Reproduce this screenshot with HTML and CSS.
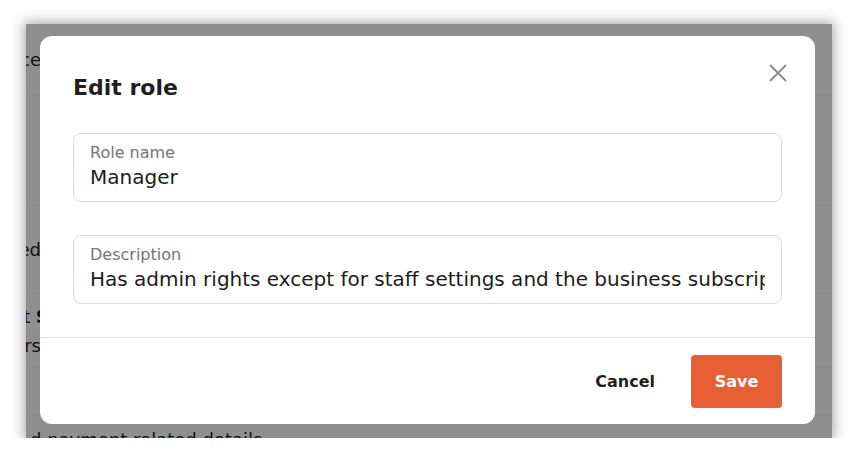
FILE: index.html
```html
<!DOCTYPE html>
<html lang="en">
<head>
  <meta charset="UTF-8">
  <meta name="viewport" content="width=device-width, initial-scale=1.0">
  <title>Edit role</title>
  <link rel="stylesheet" href="styles.css">
</head>
<body>
  <div class="screen">
    <div class="page">
      <div class="row r1"><div class="lead">Service</div></div>
      <div class="row r2"></div>
      <div class="row r3"><div class="lead">Services added</div></div>
      <div class="row r4">
        <div class="lead wide">Edit <b>Staff</b></div>
        <div class="lead">View all members</div>
      </div>
      <div class="row r5"></div>
      <div class="row r6"><div class="tail">d payment related details</div></div>
    </div>
    <div class="overlay"></div>

    <div class="modal">
      <div class="modal-head">
        <h2>Edit role</h2>
        <button class="close" aria-label="Close">
          <svg width="18" height="18" viewBox="0 0 18 18"><path d="M1 1L17 17M17 1L1 17" stroke="#8a8a8a" stroke-width="1.8" fill="none"/></svg>
        </button>
      </div>
      <div class="modal-body">
        <div class="field">
          <div class="label">Role name</div>
          <div class="value">Manager</div>
        </div>
        <div class="field">
          <div class="label">Description</div>
          <div class="value">Has admin rights except for staff settings and the business subscription</div>
        </div>
      </div>
      <div class="modal-foot">
        <button class="btn cancel">Cancel</button>
        <button class="btn save">Save</button>
      </div>
    </div>
  </div>
</body>
</html>
```

FILE: styles.css
```css
* {
  box-sizing: border-box;
}
body {
  margin: 0;
  background: #fff;
  font-family: "DejaVu Sans", "Noto Sans", sans-serif;
  color: #1c1c1c;
}
.screen {
  position: relative;
  width: 806px;
  height: 414px;
  margin: 24px 0 0 26px;
  overflow: hidden;
  background: #fff;
  box-shadow: 0 0 12px 2px rgba(0, 0, 0, 0.35);
}
.page {
  display: flex;
  flex-direction: column;
  font-size: 18px;
  color: #222;
}
.row {
  display: flex;
  flex-direction: column;
  justify-content: center;
  border-bottom: 1px solid #f3f3f3;
}
.r1 { height: 72px; }
.r2 { height: 110px; }
.r3 { height: 88px; }
.r4 { height: 74px; gap: 8px; }
.r5 { height: 48px; }
.r6 { height: 48px; padding-left: 4px; }
.lead {
  width: 15px;
  display: flex;
  justify-content: flex-end;
  white-space: nowrap;
}
.lead.wide {
  width: 58px;
}
.lead b {
  margin-left: 0.3em;
}
.tail {
  white-space: nowrap;
}
.overlay {
  position: absolute;
  inset: 0;
  background: rgba(0, 0, 0, 0.44);
}
.modal {
  position: absolute;
  left: 14px;
  top: 12px;
  width: 775px;
  background: #fff;
  border-radius: 12px;
  display: flex;
  flex-direction: column;
}
.modal-head {
  position: relative;
  padding: 38px 33px 0;
}
.modal-head h2 {
  margin: 0;
  font-size: 22px;
  line-height: 28px;
  font-weight: 700;
  color: #1f1f1f;
}
.close {
  position: absolute;
  top: 28px;
  right: 28px;
  width: 18px;
  height: 18px;
  padding: 0;
  border: none;
  background: none;
}
.close svg {
  display: block;
}
.modal-body {
  display: flex;
  flex-direction: column;
  gap: 33px;
  padding: 31px 33px 33px;
}
.field {
  border: 1px solid #dcdcdc;
  border-radius: 8px;
  padding: 10px 16px 12px;
}
.label {
  font-size: 16px;
  line-height: 18px;
  color: #757575;
}
.value {
  margin-top: 3px;
  font-size: 20px;
  line-height: 24px;
  color: #1c1c1c;
  white-space: nowrap;
  overflow: hidden;
}
.modal-foot {
  display: flex;
  justify-content: flex-end;
  align-items: center;
  gap: 18px;
  border-top: 1px solid #e2e2e2;
  padding: 17px 33px 16px;
}
.btn {
  height: 53px;
  border: none;
  border-radius: 4px;
  font-family: inherit;
  font-size: 16px;
  font-weight: 700;
}
.cancel {
  background: none;
  color: #1f1f1f;
  padding: 0 18px;
}
.save {
  width: 91px;
  background: #e85f35;
  color: #fff;
}
```
